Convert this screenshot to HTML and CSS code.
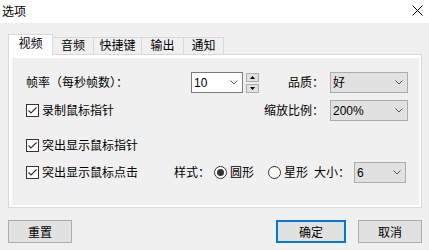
FILE: index.html
```html
<!DOCTYPE html>
<html lang="zh-CN">
<head>
  <meta charset="UTF-8" />
  <title>选项</title>
  <link rel="stylesheet" href="styles.css">
</head>
<body>
  <div class="titlebar">
    <span class="title">选项</span>
    <svg class="close" width="11" height="11" viewBox="0 0 11 11">
      <path d="M0.5 0.5 L10.5 10.5 M10.5 0.5 L0.5 10.5" stroke="#000" stroke-width="1" fill="none" />
    </svg>
  </div>

  <div class="dialog">
    <!-- Pestañas -->
    <div class="tabs">
      <div class="tab active tab-video">视频</div>
      <div class="tab tab-audio">音频</div>
      <div class="tab tab-keys">快捷键</div>
      <div class="tab tab-output">输出</div>
      <div class="tab last tab-notify">通知</div>
    </div>

    <div class="panel">
      <div class="inner">

        <!-- Fila 1 -->
        <div class="row row1">
          <span class="label fps-label">帧率（每秒帧数）：</span>
          <div class="spin-input">
            <span>10</span>
            <svg width="8" height="5" viewBox="0 0 8 5"><polyline points="0.5,0.5 4,4 7.5,0.5" stroke="#555" fill="none" /></svg>
          </div>
          <div class="spin-arrows">
            <div class="arrow"><svg width="5" height="3" viewBox="0 0 5 3"><polygon points="2.5,0 5,3 0,3" fill="#000" /></svg></div>
            <div class="arrow"><svg width="5" height="3" viewBox="0 0 5 3"><polygon points="0,0 5,0 2.5,3" fill="#000" /></svg></div>
          </div>
          <div class="field">
            <span class="label">品质：</span>
            <div class="combo wide">
              <span>好</span>
              <svg width="8" height="5" viewBox="0 0 8 5"><polyline points="0.5,0.5 4,4 7.5,0.5" stroke="#555" fill="none" /></svg>
            </div>
          </div>
        </div>

        <!-- Fila 2 -->
        <div class="row row2">
          <span class="check">
            <svg width="13" height="13" viewBox="0 0 13 13"><rect x="0.5" y="0.5" width="12" height="12" fill="#fff" stroke="#333" /><polyline points="2.5,6.5 5,9 10.5,3.5" stroke="#333" stroke-width="1.2" fill="none" /></svg>
            <span>录制鼠标指针</span>
          </span>
          <div class="field">
            <span class="label">缩放比例：</span>
            <div class="combo wide">
              <span>200%</span>
              <svg width="8" height="5" viewBox="0 0 8 5"><polyline points="0.5,0.5 4,4 7.5,0.5" stroke="#555" fill="none" /></svg>
            </div>
          </div>
        </div>

        <!-- Fila 3 -->
        <div class="row row3">
          <span class="check">
            <svg width="13" height="13" viewBox="0 0 13 13"><rect x="0.5" y="0.5" width="12" height="12" fill="#fff" stroke="#333" /><polyline points="2.5,6.5 5,9 10.5,3.5" stroke="#333" stroke-width="1.2" fill="none" /></svg>
            <span>突出显示鼠标指针</span>
          </span>
        </div>

        <!-- Fila 4 -->
        <div class="row row4">
          <span class="check">
            <svg width="13" height="13" viewBox="0 0 13 13"><rect x="0.5" y="0.5" width="12" height="12" fill="#fff" stroke="#333" /><polyline points="2.5,6.5 5,9 10.5,3.5" stroke="#333" stroke-width="1.2" fill="none" /></svg>
            <span>突出显示鼠标点击</span>
          </span>
          <span class="label style-label">样式：</span>
          <span class="radio">
            <svg width="13" height="13" viewBox="0 0 13 13"><circle cx="6.5" cy="6.5" r="6" fill="#fff" stroke="#333" /><circle cx="6.5" cy="6.5" r="3.5" fill="#333" /></svg>
            <span>圆形</span>
          </span>
          <span class="radio star">
            <svg width="13" height="13" viewBox="0 0 13 13"><circle cx="6.5" cy="6.5" r="6" fill="#fff" stroke="#333" /></svg>
            <span>星形</span>
          </span>
          <span class="label size-label">大小：</span>
          <div class="combo small">
            <span>6</span>
            <svg width="8" height="5" viewBox="0 0 8 5"><polyline points="0.5,0.5 4,4 7.5,0.5" stroke="#555" fill="none" /></svg>
          </div>
        </div>

      </div>
    </div>

    <div class="buttons">
      <button class="btn reset">重置</button>
      <button class="btn ok">确定</button>
      <button class="btn cancel">取消</button>
    </div>
  </div>
</body>
</html>
```

FILE: styles.css
```css
/* Estilos */
body {
  margin: 0;
  padding: 0;
  width: 429px;
  height: 250px;
  overflow: hidden;
  background-color: #f0f0f0;
  color: #000000;
  font-family: "Liberation Sans", "Noto Sans CJK SC", sans-serif;
  font-size: 12px;
  line-height: 16px;
}

.titlebar {
  height: 23px;
  background-color: #ffffff;
  display: flex;
  align-items: center;
  padding-left: 2px;
}

.close {
  margin-left: auto;
  margin-right: 6px;
  margin-top: -2px;
}

.dialog {
  padding: 11px 7px 0 8px;
}

.tabs {
  display: flex;
  align-items: flex-end;
  height: 20px;
}

.tab {
  box-sizing: border-box;
  height: 17px;
  border-top: 1px solid #d9d9d9;
  border-left: 1px solid #d9d9d9;
  background-color: #f0f0f0;
  text-align: center;
  line-height: 16px;
}

.tab.last {
  border-right: 1px solid #d9d9d9;
}

.tab.active {
  position: relative;
  z-index: 1;
  height: 21px;
  margin-bottom: -1px;
  margin-right: -1px;
  background-color: #ffffff;
  border-right: 1px solid #d9d9d9;
  line-height: 18px;
}

.tab-video { width: 45px; }
.tab-audio { width: 41px; }
.tab-keys { width: 48px; }
.tab-output { width: 42px; }
.tab-notify { width: 41px; }

.panel {
  box-sizing: border-box;
  width: 414px;
  height: 154px;
  border: 1px solid #d9d9d9;
  background-color: #ffffff;
  padding: 3px 2px 2px 3px;
}

.inner {
  height: 100%;
  background-color: #f0f0f0;
  padding: 14px 11px 0 14px;
  box-sizing: border-box;
}

.row {
  display: flex;
  align-items: center;
  height: 21px;
}

.row2 {
  margin-top: 7px;
}

.row3 {
  margin-top: 14px;
}

.row4 {
  margin-top: 6px;
}

.fps-label {
  width: 165px;
}

.spin-input {
  box-sizing: border-box;
  width: 52px;
  height: 21px;
  border: 1px solid #7a7a7a;
  background-color: #ffffff;
  display: flex;
  align-items: center;
  justify-content: space-between;
  padding: 0 4px 0 2px;
}

.spin-arrows {
  display: flex;
  flex-direction: column;
  gap: 2px;
  margin-left: 3px;
}

.arrow {
  box-sizing: border-box;
  width: 13px;
  height: 9px;
  border: 1px solid #adadad;
  background-color: #e1e1e1;
  display: flex;
  align-items: center;
  justify-content: center;
}

.field {
  margin-left: auto;
  display: flex;
  align-items: center;
}

.combo {
  box-sizing: border-box;
  height: 21px;
  border: 1px solid #adadad;
  background-color: #e1e1e1;
  display: flex;
  align-items: center;
  justify-content: space-between;
  padding: 0 4px 0 2px;
  margin-left: 6px;
}

.combo.wide {
  width: 78px;
}

.combo.small {
  width: 52px;
  margin-left: 4px;
}

.check,
.radio {
  display: flex;
  align-items: center;
  gap: 3px;
}

.style-label {
  margin-left: 36px;
}

.radio {
  margin-left: 4px;
}

.radio.star {
  margin-left: 14px;
}

.size-label {
  margin-left: 6px;
}

.buttons {
  display: flex;
  margin-top: 12px;
}

.btn {
  box-sizing: border-box;
  height: 23px;
  border: 1px solid #adadad;
  background-color: #e1e1e1;
  font-family: "Liberation Sans", "Noto Sans CJK SC", sans-serif;
  font-size: 12px;
  color: #000000;
  padding: 0;
}

.reset {
  width: 64px;
}

.ok {
  width: 70px;
  margin-left: auto;
  border: 2px solid #0078d7;
}

.cancel {
  width: 64px;
  margin-left: 12px;
}
```
